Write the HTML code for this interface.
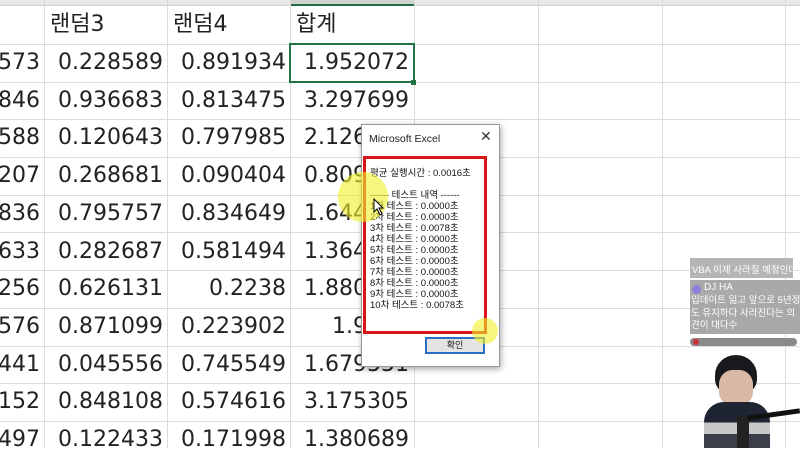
<!DOCTYPE html>
<html><head><meta charset="utf-8"><style>
*{margin:0;padding:0;box-sizing:border-box}
body{width:800px;height:448px;overflow:hidden;background:#fff;position:relative;font-family:"Liberation Sans","Noto Sans CJK KR",sans-serif}
.vl{position:absolute;top:0;width:1px;height:448px;background:#dcdcdc}
.hl{position:absolute;left:0;width:800px;height:1px;background:#dcdcdc}
.c{position:absolute;height:38px;line-height:38px;font-size:22px;color:#222;text-align:right;white-space:nowrap;font-family:"DejaVu Sans",sans-serif}
.h{position:absolute;top:6px;height:38px;line-height:38px;font-size:22px;color:#222;font-family:"DejaVu Sans","Noto Sans CJK KR",sans-serif}
.dlg{position:absolute;left:361px;top:124px;width:139px;height:243px;background:#fff;border:1px solid #999;box-shadow:1px 2px 6px rgba(0,0,0,.35)}
.dt{font-size:9.5px;line-height:12px;color:#111;position:absolute;left:8px;white-space:nowrap;font-family:"Liberation Sans","Noto Sans CJK KR",sans-serif}
</style></head><body>
<div style="position:absolute;left:0;top:0;width:800px;height:6px;background:#e8e8e8;border-bottom:1px solid #cfcfcf"></div>
<div style="position:absolute;left:290px;top:0;width:124px;height:6px;background:#cfd2cf;border-bottom:2px solid #1e6e42"></div>
<div class="vl" style="left:44px"></div><div class="vl" style="left:167px"></div><div class="vl" style="left:290px"></div><div class="vl" style="left:414px"></div><div class="vl" style="left:538px"></div><div class="vl" style="left:662px"></div><div class="vl" style="left:785px"></div>
<div class="hl" style="top:44px"></div><div class="hl" style="top:82px"></div><div class="hl" style="top:119px"></div><div class="hl" style="top:157px"></div><div class="hl" style="top:195px"></div><div class="hl" style="top:232px"></div><div class="hl" style="top:270px"></div><div class="hl" style="top:308px"></div><div class="hl" style="top:346px"></div><div class="hl" style="top:383px"></div><div class="hl" style="top:421px"></div>
<div class="h" style="left:50px">랜덤3</div><div class="h" style="left:173px">랜덤4</div><div class="h" style="left:296px">합계</div>
<div style="position:absolute;left:289px;top:43px;width:126px;height:40px;border:2px solid #217346"></div>
<div style="position:absolute;left:411px;top:80px;width:5px;height:5px;background:#217346"></div>
<div id="g"></div>
<script>
var d=[["573","0.228589","0.891934","1.952072"],["846","0.936683","0.813475","3.297699"],["588","0.120643","0.797985","2.126051"],["207","0.268681","0.090404","0.809251"],["836","0.795757","0.834649","1.644021"],["633","0.282687","0.581494","1.364112"],["256","0.626131","0.2238","1.880543"],["576","0.871099","0.223902","1.9955"],["441","0.045556","0.745549","1.679551"],["152","0.848108","0.574616","3.175305"],["497","0.122433","0.171998","1.380689"]];
var R=[40,163,286,409],h="";
for(var i=0;i<d.length;i++){var t=44+37.7*i;for(var j=0;j<4;j++){h+='<div class="c" style="top:'+t+'px;right:'+(800-R[j])+'px">'+d[i][j]+'</div>';}}
document.getElementById('g').innerHTML=h;
</script>
<div class="dlg">
<div style="position:absolute;left:7px;top:8px;font-size:10.5px;color:#222">Microsoft Excel</div>
<div style="position:absolute;left:118px;top:3px;font-size:14px;color:#333">✕</div>
<div style="position:absolute;left:1px;top:31px;width:124px;height:178px;border:3px solid #d8141b"></div>
<div class="dt" style="top:43px">평균 실행시간 : 0.0016초</div>
<div class="dt" style="top:65px">------ 테스트 내역 ------</div>
<div class="dt" style="top:76px">1차 테스트 : 0.0000초</div>
<div class="dt" style="top:87px">2차 테스트 : 0.0000초</div>
<div class="dt" style="top:98px">3차 테스트 : 0.0078초</div>
<div class="dt" style="top:109px">4차 테스트 : 0.0000초</div>
<div class="dt" style="top:120px">5차 테스트 : 0.0000초</div>
<div class="dt" style="top:131px">6차 테스트 : 0.0000초</div>
<div class="dt" style="top:142px">7차 테스트 : 0.0000초</div>
<div class="dt" style="top:153px">8차 테스트 : 0.0000초</div>
<div class="dt" style="top:164px">9차 테스트 : 0.0000초</div>
<div class="dt" style="top:175px">10차 테스트 : 0.0078초</div>
<div style="position:absolute;left:63px;top:212px;width:60px;height:17px;border:2px solid #2a6fc4;background:#e4e4e4;font-size:9px;line-height:13px;text-align:center;color:#111">확인</div>
</div>
<div style="position:absolute;left:338px;top:172px;width:50px;height:50px;border-radius:50%;background:rgba(240,240,40,.6)"></div>
<div style="position:absolute;left:472px;top:318px;width:26px;height:26px;border-radius:50%;background:rgba(240,240,40,.6)"></div>
<svg style="position:absolute;left:373px;top:198px" width="12" height="18"><path d="M1 1 L1 14 L4 11 L7 17 L9 16 L6 10 L10 10 Z" fill="#fff" stroke="#000" stroke-width="1"/></svg>
<div style="position:absolute;left:690px;top:258px;width:103px;height:20px;background:#b5b5b5"></div>
<div style="position:absolute;left:692px;top:262px;font-size:9.5px;color:#fff;white-space:nowrap">VBA 이제 사라질 예정인데</div>
<div style="position:absolute;left:690px;top:280px;width:110px;height:54px;background:#a9a9a9"></div>
<div style="position:absolute;left:692px;top:285px;width:9px;height:9px;border-radius:50%;background:#8b7fe0"></div>
<div style="position:absolute;left:704px;top:282px;font-size:10px;color:#fff">DJ HA</div>
<div style="position:absolute;left:691px;top:295px;font-size:9.5px;color:#fff;line-height:12.5px;width:110px">입데이트 잃고 앞으로 5년정<br>도 유지하다 사라진다는 의<br>견이 대다수</div>
<div style="position:absolute;left:690px;top:338px;width:107px;height:8px;border-radius:4px;background:#8a8a8a"></div>
<div style="position:absolute;left:693px;top:339px;width:6px;height:6px;border-radius:50%;background:#c33"></div>
<div style="position:absolute;left:715px;top:355px;width:42px;height:40px;border-radius:50% 50% 40% 40%;background:#1a1a1e"></div>
<div style="position:absolute;left:719px;top:370px;width:34px;height:36px;border-radius:40%;background:#d9b8a4"></div>
<div style="position:absolute;left:704px;top:402px;width:66px;height:46px;border-radius:20px 20px 0 0;background:linear-gradient(#1f2433 0 45%,#c8c8c8 45% 70%,#3a3f4a 70%)"></div>
<div style="position:absolute;left:737px;top:416px;width:12px;height:32px;background:#222"></div>
<div style="position:absolute;left:747px;top:412px;width:53px;height:5px;background:#111;transform:rotate(-8deg)"></div>
</body></html>
